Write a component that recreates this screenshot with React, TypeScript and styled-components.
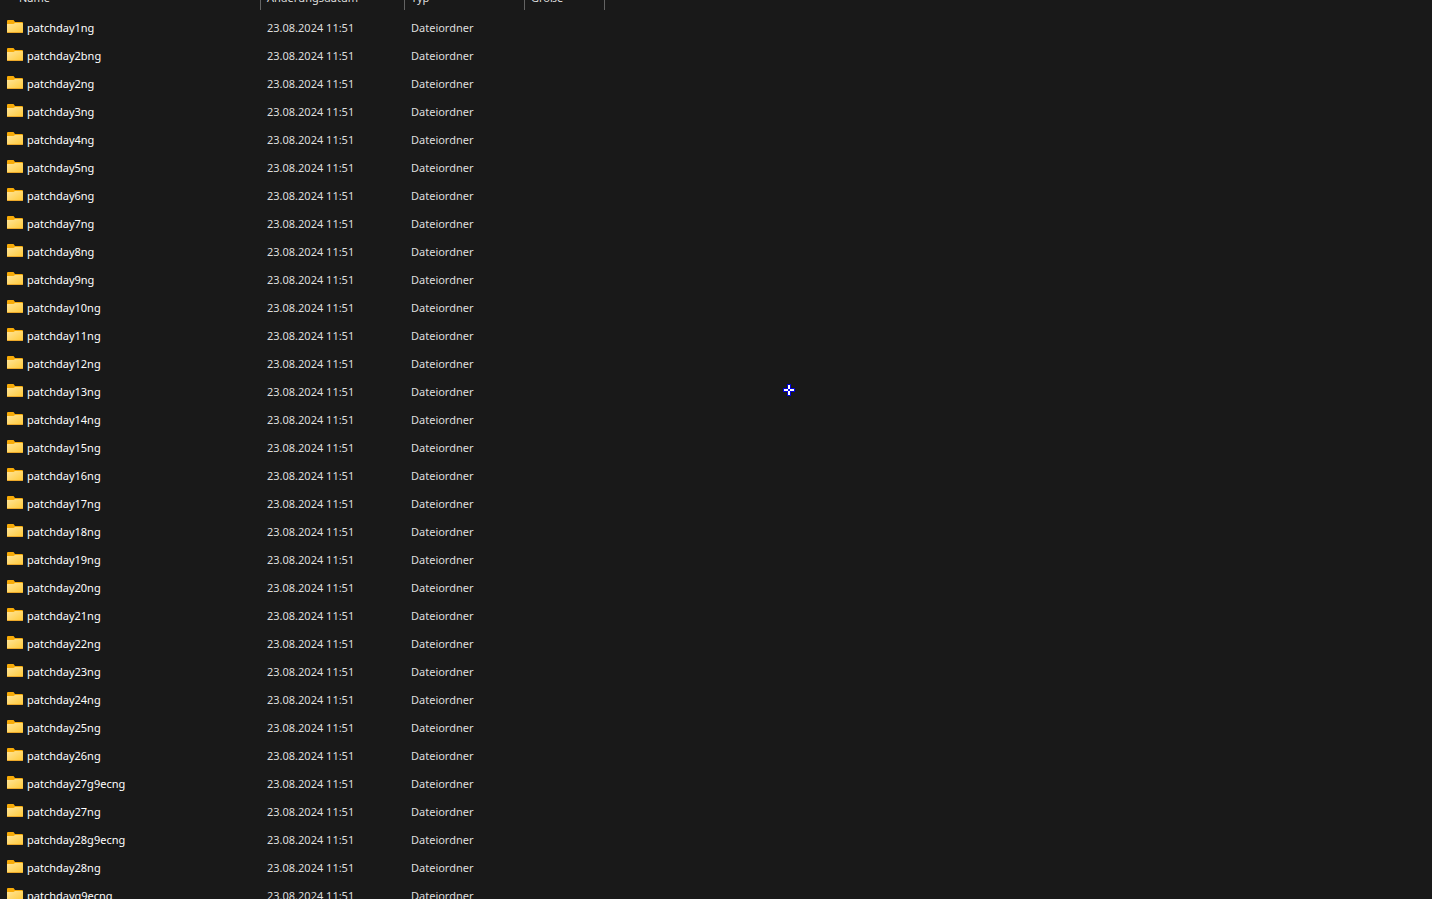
import React from 'react';
import styled, { createGlobalStyle } from 'styled-components';

const GlobalStyle = createGlobalStyle`
  * { box-sizing: border-box; }
  body {
    margin: 0;
    background: #191919;
    color: #dedede;
    font: 11px/16px "Noto Sans", "Open Sans", sans-serif;
  }
`;

const Pane = styled.main`
  position: relative;
  height: 100vh;
  overflow: hidden;
  background: #191919;
`;

const FileTable = styled.table`
  width: 100%;
  table-layout: fixed;
  border-collapse: collapse;
`;

const Column = styled.col<{ $width?: number }>`
  width: ${({ $width }) => ($width ? `${$width}px` : 'auto')};
`;

const HeaderCell = styled.th`
  height: 14px;
  padding: 0;
  font-weight: 400;
  text-align: left;
  vertical-align: top;
`;

const HeaderLabel = styled.div<{ $indent: number }>`
  display: flex;
  align-items: flex-end;
  height: 10px;
  padding: 0 0 4px ${({ $indent }) => $indent}px;
  border-right: 1px solid #636363;
  overflow: hidden;
`;

const Cell = styled.td`
  height: 28px;
  padding: 0 6px;
  white-space: nowrap;
`;

const NameCell = styled(Cell)`
  color: #ffffff;
`;

const FileName = styled.div`
  display: flex;
  align-items: center;
  gap: 4px;
  padding-left: 1px;
`;

const Icon = styled.svg`
  flex: none;
  display: block;
  width: 16px;
  height: 16px;
`;

const Pointer = styled.svg`
  position: absolute;
  left: 783px;
  top: 384px;
  width: 12px;
  height: 12px;
`;

const FolderIcon = () => (
  <Icon viewBox="0 0 16 16" aria-hidden="true">
    <path d="M0 1Q0 0 1 0H6.5L8 2H15Q16 2 16 3V8H0Z" fill="#f7ab08" />
    <path d="M0 4H6.5L8 3H15Q16 3 16 4V12Q16 13 15 13H1Q0 13 0 12Z" fill="url(#folder)" />
    <path d="M0 12H16Q16 13 15 13H1Q0 13 0 12Z" fill="#eda92a" />
  </Icon>
);

const numbered = (from: number, to: number) =>
  Array.from({ length: to - from + 1 }, (_, i) => `patchday${from + i}ng`);

const folders = [
  'patchday1ng',
  'patchday2bng',
  ...numbered(2, 26),
  'patchday27g9ecng',
  'patchday27ng',
  'patchday28g9ecng',
  'patchday28ng',
  'patchdayg9ecng',
];

const headers = [
  { label: 'Name', indent: 19 },
  { label: 'Änderungsdatum', indent: 6 },
  { label: 'Typ', indent: 6 },
  { label: 'Größe', indent: 6 },
];

export default function App() {
  return (
    <Pane>
      <GlobalStyle />
      <FileTable>
        <colgroup>
          <Column $width={261} />
          <Column $width={144} />
          <Column $width={120} />
          <Column $width={80} />
          <Column />
        </colgroup>
        <thead>
          <tr>
            {headers.map(({ label, indent }) => (
              <HeaderCell key={label} scope="col">
                <HeaderLabel $indent={indent}>{label}</HeaderLabel>
              </HeaderCell>
            ))}
            <td />
          </tr>
        </thead>
        <tbody>
          {folders.map((name) => (
            <tr key={name}>
              <NameCell>
                <FileName>
                  <FolderIcon />
                  {name}
                </FileName>
              </NameCell>
              <Cell>23.08.2024 11:51</Cell>
              <Cell>Dateiordner</Cell>
              <Cell />
              <Cell />
            </tr>
          ))}
        </tbody>
      </FileTable>
      <Pointer viewBox="0 0 12 12" shapeRendering="crispEdges" aria-hidden="true">
        <defs>
          <linearGradient id="folder" x1="0" y1="0" x2="1" y2="1">
            <stop offset="0" stopColor="#ffe59a" />
            <stop offset="1" stopColor="#ffc937" />
          </linearGradient>
        </defs>
        <path d="M4 0H8V4H12V8H8V12H4V8H0V4H4Z" fill="#0000d8" />
        <path d="M5 1H7V11H5ZM1 5H11V7H1Z" fill="#fff" />
        <path d="M5 5H7V7H5Z" fill="#0000d8" />
      </Pointer>
    </Pane>
  );
}
